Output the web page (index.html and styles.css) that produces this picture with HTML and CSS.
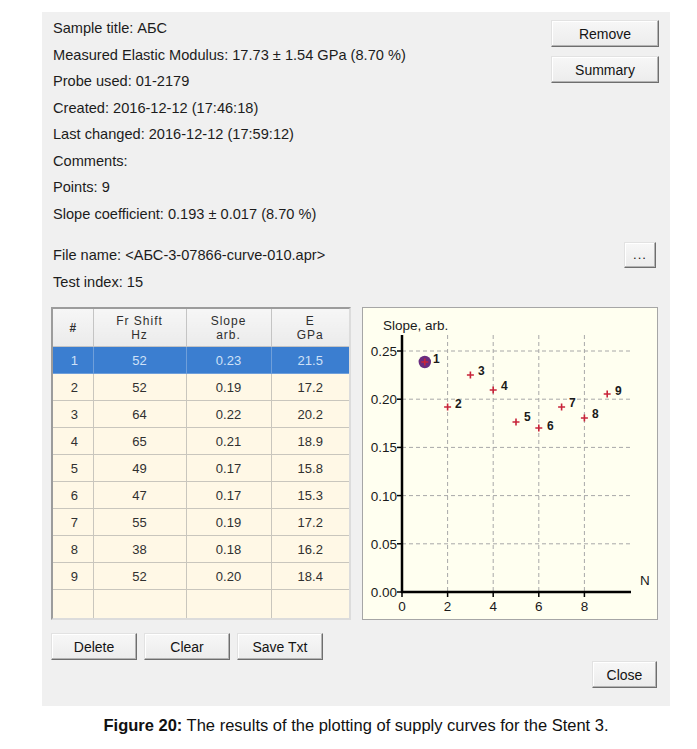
FILE: index.html
```html
<!DOCTYPE html>
<html>
<head>
<meta charset="utf-8">
<link rel="stylesheet" href="styles.css">
</head>
<body>
<div class="window">
  <div class="top">
    <div class="info">
      <p>Sample title: АБС</p>
      <p>Measured Elastic Modulus: 17.73 ± 1.54 GPa (8.70 %)</p>
      <p>Probe used: 01-2179</p>
      <p>Created: 2016-12-12 (17:46:18)</p>
      <p>Last changed: 2016-12-12 (17:59:12)</p>
      <p>Comments:</p>
      <p>Points: 9</p>
      <p>Slope coefficient: 0.193 ± 0.017 (8.70 %)</p>
    </div>
    <div class="actions">
      <button class="btn btn-wide">Remove</button>
      <button class="btn btn-wide">Summary</button>
    </div>
  </div>
  <div class="file">
    <div class="file-row">
      <p>File name: &lt;АБС-3-07866-curve-010.apr&gt;</p>
      <button class="btn btn-dots">...</button>
    </div>
    <p>Test index: 15</p>
  </div>
  <div class="main">
    <div class="grid-box">
      <table class="data">
        <colgroup><col class="c1"><col class="c2"><col class="c3"><col class="c4"></colgroup>
        <thead>
          <tr><th class="hash">#</th><th>Fr Shift<br>Hz</th><th>Slope<br>arb.</th><th>E<br>GPa</th></tr>
        </thead>
        <tbody>
          <tr class="sel"><td>1</td><td>52</td><td>0.23</td><td>21.5</td></tr>
          <tr><td>2</td><td>52</td><td>0.19</td><td>17.2</td></tr>
          <tr><td>3</td><td>64</td><td>0.22</td><td>20.2</td></tr>
          <tr><td>4</td><td>65</td><td>0.21</td><td>18.9</td></tr>
          <tr><td>5</td><td>49</td><td>0.17</td><td>15.8</td></tr>
          <tr><td>6</td><td>47</td><td>0.17</td><td>15.3</td></tr>
          <tr><td>7</td><td>55</td><td>0.19</td><td>17.2</td></tr>
          <tr><td>8</td><td>38</td><td>0.18</td><td>16.2</td></tr>
          <tr><td>9</td><td>52</td><td>0.20</td><td>18.4</td></tr>
          <tr class="empty"><td></td><td></td><td></td><td></td></tr>
        </tbody>
      </table>
    </div>
    <div class="chart">
      <svg width="294" height="311" viewBox="1 1 294 311" xmlns="http://www.w3.org/2000/svg">
        <g class="grid">
          <line x1="40" y1="236.8" x2="269" y2="236.8"/>
          <line x1="40" y1="188.6" x2="269" y2="188.6"/>
          <line x1="40" y1="140.4" x2="269" y2="140.4"/>
          <line x1="40" y1="92.2" x2="269" y2="92.2"/>
          <line x1="40" y1="44" x2="269" y2="44"/>
          <line x1="85.6" y1="28" x2="85.6" y2="285"/>
          <line x1="131.2" y1="28" x2="131.2" y2="285"/>
          <line x1="176.8" y1="28" x2="176.8" y2="285"/>
          <line x1="222.4" y1="28" x2="222.4" y2="285"/>
        </g>
        <g class="ticks">
          <line x1="35" y1="285" x2="40" y2="285"/>
          <line x1="35" y1="236.8" x2="40" y2="236.8"/>
          <line x1="35" y1="188.6" x2="40" y2="188.6"/>
          <line x1="35" y1="140.4" x2="40" y2="140.4"/>
          <line x1="35" y1="92.2" x2="40" y2="92.2"/>
          <line x1="35" y1="44" x2="40" y2="44"/>
          <line x1="40" y1="285" x2="40" y2="290"/>
          <line x1="85.6" y1="285" x2="85.6" y2="290"/>
          <line x1="131.2" y1="285" x2="131.2" y2="290"/>
          <line x1="176.8" y1="285" x2="176.8" y2="290"/>
          <line x1="222.4" y1="285" x2="222.4" y2="290"/>
        </g>
        <g class="axes">
          <line x1="40" y1="28" x2="40" y2="286"/>
          <line x1="39" y1="285" x2="269" y2="285"/>
        </g>
        <g class="ylab">
          <text x="35" y="290">0.00</text>
          <text x="35" y="241.8">0.05</text>
          <text x="35" y="193.6">0.10</text>
          <text x="35" y="145.4">0.15</text>
          <text x="35" y="97.2">0.20</text>
          <text x="35" y="49">0.25</text>
        </g>
        <g class="xlab">
          <text x="40" y="304">0</text>
          <text x="85.6" y="304">2</text>
          <text x="131.2" y="304">4</text>
          <text x="176.8" y="304">6</text>
          <text x="222.4" y="304">8</text>
        </g>
        <text class="title" x="21" y="23">Slope, arb.</text>
        <text class="title" x="278" y="278">N</text>
        <circle cx="62.8" cy="55" r="6.2" class="sel-pt"/>
        <g class="pts">
          <path d="M59.3 55h7M62.8 51.5v7"/>
          <path d="M82.1 100h7M85.6 96.5v7"/>
          <path d="M104.9 68h7M108.4 64.5v7"/>
          <path d="M127.7 83h7M131.2 79.5v7"/>
          <path d="M150.5 115h7M154 111.5v7"/>
          <path d="M173.3 121h7M176.8 117.5v7"/>
          <path d="M196.1 100h7M199.6 96.5v7"/>
          <path d="M218.9 111h7M222.4 107.5v7"/>
          <path d="M241.7 87h7M245.2 83.5v7"/>
        </g>
        <g class="plab">
          <text x="71" y="56">1</text>
          <text x="93" y="101">2</text>
          <text x="116" y="68">3</text>
          <text x="139" y="83">4</text>
          <text x="162" y="114">5</text>
          <text x="185" y="123">6</text>
          <text x="207" y="100">7</text>
          <text x="230" y="111">8</text>
          <text x="253" y="88">9</text>
        </g>
      </svg>
    </div>
  </div>
  <div class="bottom">
    <button class="btn btn-b">Delete</button>
    <button class="btn btn-b">Clear</button>
    <button class="btn btn-b">Save Txt</button>
  </div>
  <div class="close-row">
    <button class="btn btn-close">Close</button>
  </div>
</div>
<p class="caption"><b>Figure 20:</b> The results of the plotting of supply curves for the Stent 3.</p>
</body>
</html>
```

FILE: styles.css
```css
html, body {
  margin: 0;
  padding: 0;
  background: #ffffff;
}

body {
  font-family: "Liberation Sans", Arial, sans-serif;
  color: #1c1c1c;
}

.window {
  margin: 12px 0 0 42px;
  width: 628px;
  height: 694px;
  box-sizing: border-box;
  padding: 0 11px 0 9px;
  background: #f0f0f0;
  display: flex;
  flex-direction: column;
}

.top {
  display: flex;
  justify-content: space-between;
  align-items: flex-start;
}

.info {
  padding: 3px 0 0 2px;
}

.info p,
.file p {
  margin: 0;
  font-size: 14.6px;
  line-height: 26.5px;
  white-space: nowrap;
}

.actions {
  margin-top: 8px;
  display: flex;
  flex-direction: column;
  gap: 9px;
}

.btn {
  font-family: "Liberation Sans", Arial, sans-serif;
  font-size: 14px;
  color: #141414;
  background: linear-gradient(#f7f7f7, #ececec);
  border: 1px solid;
  border-color: #e2e2e2 #6e6e6e #6e6e6e #e2e2e2;
  box-shadow: inset -1px -1px 0 #b4b4b4, inset 1px 1px 0 #ffffff;
  padding: 0;
  margin: 0;
  cursor: default;
}

.btn-wide {
  width: 108px;
  height: 27px;
}

.file {
  margin-top: 15px;
  padding-left: 2px;
}

.file-row {
  display: flex;
  justify-content: space-between;
  align-items: center;
}

.btn-dots {
  width: 32px;
  height: 26px;
  margin-right: 3px;
  font-size: 13px;
  line-height: 10px;
  letter-spacing: 1px;
}

.main {
  margin-top: 12px;
  height: 313px;
  display: flex;
  gap: 11px;
}

.grid-box {
  width: 300px;
  height: 313px;
  box-sizing: border-box;
  border: 2px solid;
  border-color: #9c9c9c #dcdcdc #dcdcdc #9c9c9c;
  background: #fff8e6;
  overflow: hidden;
}

.data {
  width: 100%;
  border-collapse: collapse;
  table-layout: fixed;
  font-family: "Liberation Sans", Arial, sans-serif;
}

.c1 { width: 40px; }
.c2 { width: 93px; }
.c3 { width: 85px; }
.c4 { width: auto; }

.data th {
  height: 37px;
  background: linear-gradient(#f6f6f6, #ebebeb);
  border: 1px solid #c4c4c4;
  border-top: none;
  font-size: 12px;
  font-weight: normal;
  line-height: 14px;
  letter-spacing: 1px;
  color: #2e2e2e;
  padding: 0;
}

.data th.hash {
  font-weight: bold;
  letter-spacing: 0;
}

.data td {
  height: 26px;
  border: 1px solid #c9c6bd;
  text-align: center;
  font-size: 13px;
  color: #303030;
  padding: 0;
}

.data tr td:first-child {
  padding-left: 3px;
}

.data tr td:first-child,
.data tr th:first-child {
  border-left: none;
}

.data tr td:last-child,
.data tr th:last-child {
  border-right: none;
}

.data tr.sel td {
  background: #3b7ed0;
  color: #cfe1f7;
  border-color: #6f9fda;
}

.data tr.empty td {
  height: 30px;
  border-bottom: none;
}

.chart {
  width: 296px;
  height: 313px;
  box-sizing: border-box;
  border: 1px solid #a6a6a6;
  background: #fffff0;
}

.chart svg {
  display: block;
}

.grid line {
  stroke: #a8a8a8;
  stroke-width: 1;
  stroke-dasharray: 4 3;
}

.ticks line {
  stroke: #000;
  stroke-width: 1.5;
}

.axes line {
  stroke: #000;
  stroke-width: 2.5;
}

.ylab text {
  font-family: "Liberation Sans", Arial, sans-serif;
  font-size: 13.5px;
  fill: #1a1a1a;
  text-anchor: end;
}

.xlab text {
  font-family: "Liberation Sans", Arial, sans-serif;
  font-size: 13.5px;
  fill: #1a1a1a;
  text-anchor: middle;
}

.title {
  font-family: "Liberation Sans", Arial, sans-serif;
  font-size: 13.5px;
  fill: #1a1a1a;
}

.sel-pt {
  fill: #6a2d80;
}

.pts path {
  stroke: #c8243a;
  stroke-width: 1.6;
  fill: none;
}

.plab text {
  font-family: "Liberation Sans", Arial, sans-serif;
  font-size: 12px;
  font-weight: bold;
  fill: #1a1a1a;
}

.bottom {
  margin-top: 13px;
  display: flex;
  gap: 7px;
}

.btn-b {
  width: 86px;
  height: 27px;
}

.close-row {
  margin-top: 1px;
  display: flex;
  justify-content: flex-end;
}

.btn-close {
  width: 65px;
  height: 27px;
  margin-right: 2px;
}

.caption {
  margin: 10px 0 0 42px;
  width: 628px;
  text-align: center;
  font-family: "Liberation Sans", Arial, sans-serif;
  font-size: 16.5px;
  line-height: 19px;
  color: #111;
}
```
